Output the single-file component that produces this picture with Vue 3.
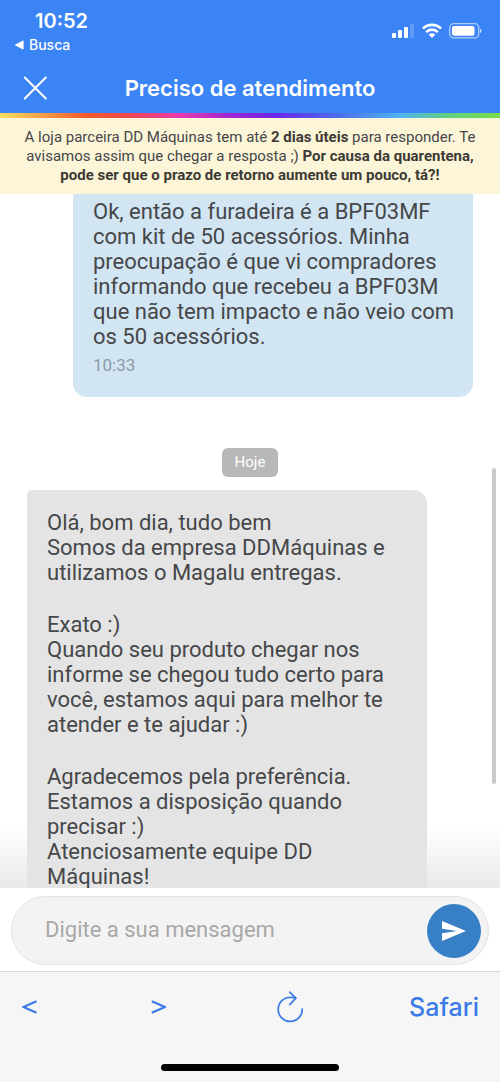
<script setup>
import { ref } from 'vue'

const draft = ref('')

const sent = {
  text: 'Ok, então a furadeira é a BPF03MF com kit de 50 acessórios. Minha preocupação é que vi compradores informando que recebeu a BPF03M que não tem impacto e não veio com os 50 acessórios.',
  time: '10:33',
}

const received = [
  'Olá, bom dia, tudo bem\nSomos da empresa DDMáquinas e utilizamos o Magalu entregas.',
  'Exato :)\nQuando seu produto chegar nos informe se chegou tudo certo para você, estamos aqui para melhor te atender e te ajudar :)',
  'Agradecemos pela preferência.\nEstamos a disposição quando precisar :)\nAtenciosamente equipe DD Máquinas!',
]
</script>

<template>
  <div class="screen">
    <header class="header">
      <div class="status">
        <div class="status-left">
          <time class="clock">10:52</time>
          <a class="return" href="#">
            <svg width="10" height="10" viewBox="0 0 10 10" aria-hidden="true">
              <path d="M0.5 5 9 0.5Q9.6 0.5 9.6 1.2V8.8Q9.6 9.5 9 9.5Z" fill="#fff" />
            </svg>
            <span>Busca</span>
          </a>
        </div>
        <div class="status-icons">
          <svg width="23" height="16" viewBox="0 0 23 16" aria-hidden="true">
            <g fill="#fff">
              <rect x="0" y="10" width="4" height="5" rx="1" />
              <rect x="6" y="7" width="4" height="8" rx="1" />
              <rect x="12" y="4" width="4" height="11" rx="1" />
              <rect x="18" y="1" width="4" height="14" rx="1" opacity=".2" />
            </g>
          </svg>
          <svg width="20" height="16" viewBox="0 0 20 16" aria-hidden="true">
            <g fill="none" stroke="#fff" stroke-width="2.7">
              <path d="M1 5.6C6 .7 14 .7 19 5.6" />
              <path d="M4.2 9.1C7.5 5.9 12.5 5.9 15.8 9.1" />
            </g>
            <path d="M6.7 11.5C8.6 9.8 11.4 9.8 13.3 11.5L10 15Z" fill="#fff" />
          </svg>
          <svg width="33" height="16" viewBox="0 0 33 16" aria-hidden="true">
            <rect x=".7" y=".7" width="29" height="14.2" rx="4" fill="none" stroke="#fff" stroke-opacity=".6" stroke-width="1.3" />
            <rect x="3" y="3" width="22.5" height="9.8" rx="2" fill="#fff" />
            <path d="M31 5.4Q32.5 6.2 32.5 7.8T31 10.2Z" fill="#fff" opacity=".75" />
          </svg>
        </div>
      </div>
      <div class="titlebar">
        <button class="close" type="button" aria-label="Fechar">
          <svg width="24" height="24" viewBox="0 0 24 24" aria-hidden="true">
            <path d="M1.8 1.5 22.8 22.5M22.8 1.5 1.8 22.5" stroke="#fff" stroke-width="2" stroke-linecap="round" />
          </svg>
        </button>
        <h1>Preciso de atendimento</h1>
      </div>
      <div class="rainbow"></div>
    </header>

    <p class="notice">
      A loja parceira DD Máquinas tem até <b>2 dias úteis</b> para responder. Te
      avisamos assim que chegar a resposta ;) <b>Por causa da quarentena,
      pode ser que o prazo de retorno aumente um pouco, tá?!</b>
    </p>

    <main class="chat">
      <article class="bubble sent">
        <p>{{ sent.text }}</p>
        <time>{{ sent.time }}</time>
      </article>
      <div class="day">Hoje</div>
      <article class="bubble received">
        <p v-for="part in received" :key="part">{{ part }}</p>
      </article>
      <div class="scrollbar"></div>
    </main>

    <form class="composer" @submit.prevent>
      <div class="field">
        <input v-model="draft" type="text" placeholder="Digite a sua mensagem" aria-label="Digite a sua mensagem" />
        <button class="send" type="submit" aria-label="Enviar">
          <svg width="24" height="20" viewBox="0 0 24 20" aria-hidden="true">
            <path d="M0 0 24 10 0 20V12.3L15 10 0 7.7Z" fill="#fff" />
          </svg>
        </button>
      </div>
    </form>

    <footer class="browser">
      <nav>
        <button type="button" aria-label="Voltar">
          <svg width="15" height="14" viewBox="0 0 15 14" aria-hidden="true">
            <path d="M14.5 1.2 1.4 7 14.5 12.8" fill="none" stroke="#3b7be8" stroke-width="2.2" />
          </svg>
        </button>
        <button type="button" aria-label="Avançar">
          <svg width="15" height="14" viewBox="0 0 15 14" aria-hidden="true">
            <path d="M.8 1.2 13.9 7 .8 12.8" fill="none" stroke="#3b7be8" stroke-width="2.2" />
          </svg>
        </button>
        <button type="button" aria-label="Recarregar">
          <svg width="28" height="32" viewBox="0 0 28 32" aria-hidden="true">
            <g fill="none" stroke="#3b7be8" stroke-width="1.7" stroke-linecap="round" stroke-linejoin="round">
              <path d="M26.2 18A12 12 0 1 1 14.2 6.4Q17 6.2 19.5 7.2" />
              <path d="M13.7 1.2 19.9 7.2 13.7 13.6" />
            </g>
          </svg>
        </button>
        <a href="#">Safari</a>
      </nav>
      <div class="home"></div>
    </footer>
  </div>
</template>

<style>
body {
  margin: 0;
}
</style>

<style scoped>
.screen {
  display: flex;
  flex-direction: column;
  height: 100vh;
  overflow: hidden;
  background: #fff;
  color: #454749;
  font-family: Roboto, "Liberation Sans", sans-serif;
}
button {
  display: flex;
  align-items: center;
  justify-content: center;
  padding: 0;
  border: 0;
  background: none;
  cursor: pointer;
}
svg {
  display: block;
}
a {
  text-decoration: none;
}
.header {
  background: #3b84f5;
  color: #fff;
  font-family: Inter, "Liberation Sans", sans-serif;
}
.status {
  display: flex;
  justify-content: space-between;
  padding: 9px 18px 0 14px;
}
.clock {
  display: block;
  padding-left: 21px;
  font-size: 20px;
  font-weight: 600;
  line-height: 24px;
}
.return {
  display: flex;
  align-items: center;
  gap: 5px;
  color: #fff;
  font-size: 14px;
  font-weight: 500;
  line-height: 24px;
}
.status-icons {
  display: flex;
  gap: 7px;
  padding-top: 14px;
}
.titlebar {
  display: grid;
  grid-template-columns: 24px 1fr 24px;
  align-items: center;
  padding: 6px 23px 0;
  height: 50px;
}
h1 {
  margin: 0;
  font-size: 22px;
  font-weight: 600;
  line-height: 28px;
  text-align: center;
  white-space: nowrap;
}
.rainbow {
  height: 5px;
  background: linear-gradient(90deg, #f8e060 0%, #f25b2b 17%, #ee4a4a 25%, #e93bb0 36%, #a026d0 46%, #6b25e6 55%, #4a70ee 68%, #4fb4f0 80%, #62d080 90%, #78dc48 100%);
}
.notice {
  margin: 0;
  padding: 10px 16px 9px;
  background: #fdf5d8;
  font-size: 15px;
  line-height: 19px;
  text-align: center;
}
.notice b {
  color: #3c3a35;
}
.chat {
  position: relative;
  display: flex;
  flex: 1;
  flex-direction: column;
  min-height: 0;
  overflow: hidden;
  padding: 0 27px;
  background: linear-gradient(0deg, #e9e9e9, #fff 60px);
}
.bubble {
  flex: none;
  box-sizing: border-box;
  width: 400px;
  max-width: 90%;
  padding: 20px;
  font-size: 22px;
  line-height: 25px;
}
.bubble p {
  margin: 0;
  white-space: pre-line;
}
.sent {
  align-self: flex-end;
  padding: 5px 16px 20px 20px;
  border-radius: 0 0 14px 14px;
  background: #d2e5f2;
}
.sent time {
  display: block;
  padding-top: 4px;
  color: #8c9ba6;
  font-size: 17px;
  line-height: 24px;
}
.day {
  align-self: center;
  margin: 51px 0 13px;
  padding: 0 13px;
  border-radius: 6px;
  background: #b8b8b8;
  color: #fff;
  font-size: 15px;
  line-height: 29px;
}
.received {
  display: grid;
  gap: 27px;
  border-radius: 5px 14px 0 0;
  background: #e4e4e4;
}
.scrollbar {
  position: absolute;
  top: 274px;
  right: 4px;
  bottom: 15%;
  width: 4px;
  border-radius: 2px;
  background: #cacaca;
}
.composer {
  padding: 8px 11px 6px;
  background: #fff;
}
.field {
  display: flex;
  align-items: center;
  padding: 6px 7px 6px 33px;
  border: 1px solid #e2e2e2;
  border-radius: 35px;
  background: #f3f3f3;
}
.field input {
  flex: 1;
  min-width: 0;
  height: 55px;
  padding: 0 0 2px;
  box-sizing: border-box;
  border: 0;
  outline: 0;
  background: none;
  color: #454749;
  font-family: inherit;
  font-size: 22px;
}
.field input::placeholder {
  color: #a8a8a8;
  opacity: 1;
}
.send {
  width: 54px;
  height: 54px;
  border-radius: 50%;
  background: #3880c5;
}
.browser {
  border-top: 1px solid #d9d9d9;
  background: #f6f6f6;
}
.browser nav {
  display: grid;
  grid-template-columns: 31fr 30fr 32fr auto;
  align-items: center;
  height: 69px;
  padding: 0 21px 0 22px;
}
.browser button {
  justify-content: flex-start;
}
.browser a {
  color: #3b7be8;
  font-family: Inter, "Liberation Sans", sans-serif;
  font-size: 25px;
  font-weight: 500;
}
.home {
  width: 178px;
  height: 7px;
  margin: 23px auto 11px;
  border-radius: 4px;
  background: #000;
}
</style>
